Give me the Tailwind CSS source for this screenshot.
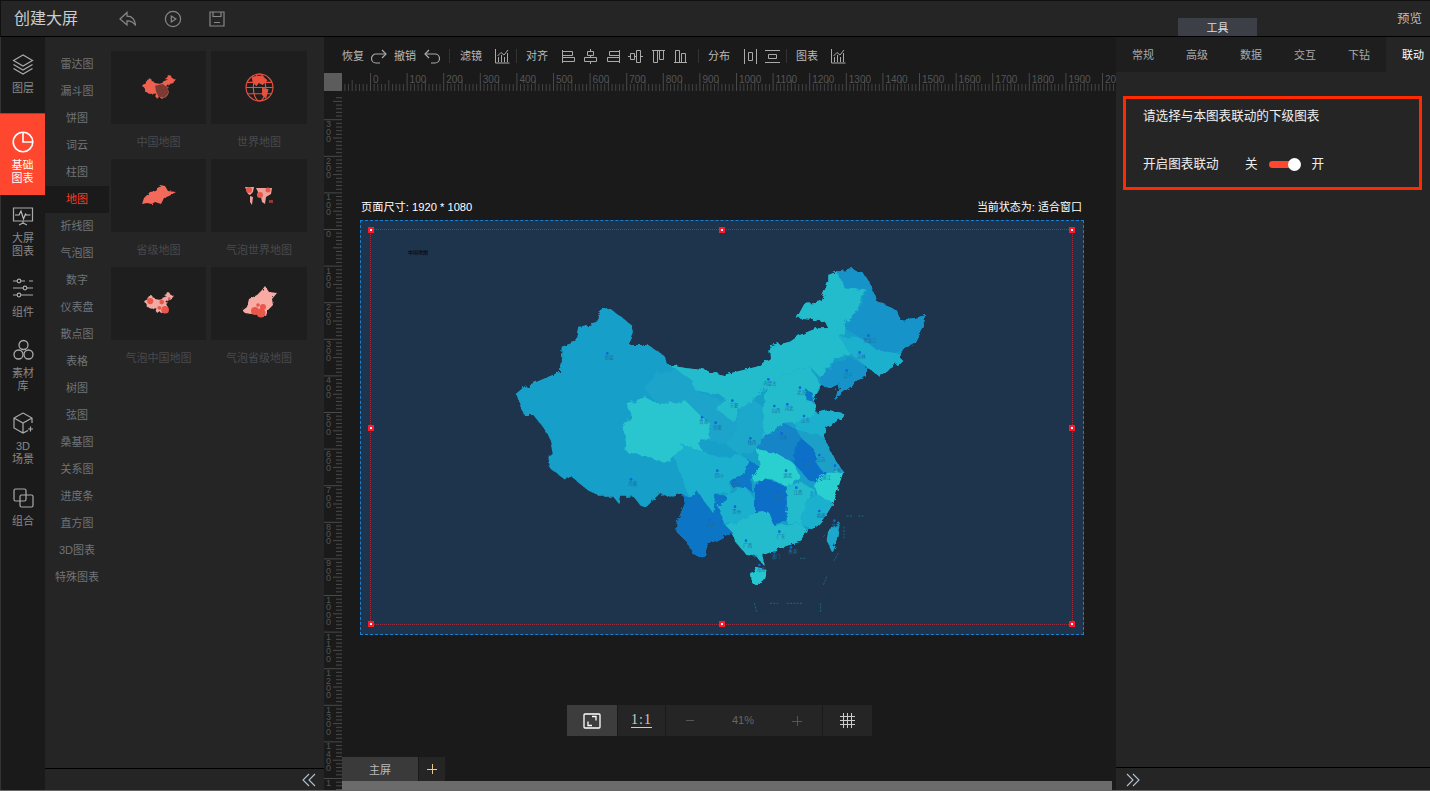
<!DOCTYPE html>
<html lang="zh-CN">
<head>
<meta charset="UTF-8">
<title>创建大屏</title>
<script src="https://cdn.jsdelivr.net/npm/@tailwindcss/browser@4"></script>
</head>
<body class="relative w-[1430px] h-[791px] overflow-hidden bg-[#252525] text-[#777] text-xs font-['Liberation_Sans','Noto_Sans_CJK_SC',sans-serif] flex flex-col">

<svg class="hidden" width="0" height="0">
  <defs>
    <path id="china" d="M50 405 85 375 110 365 180 335 185 260 225 245 235 200 290 190 290 165 315 145 335 150 395 195 400 225 385 255 445 255 490 285 505 315 560 325 610 330 670 345 730 330 770 320 810 295 808 260 830 255 870 245 900 225 950 205 985 205 975 185 940 180 890 175 915 128 960 125 985 65 985 45 1010 35 1060 28 1090 40 1115 80 1130 125 1190 150 1200 180 1240 175 1280 165 1265 205 1240 255 1205 265 1205 310 1170 320 1140 350 1100 320 1095 345 1020 405 1005 420 1020 370 990 385 965 375 940 425 950 460 985 450 1030 460 1025 475 980 500 970 530 1000 590 1020 620 1030 635 1015 680 1000 730 975 770 940 810 920 810 900 845 850 860 790 885 790 915 770 890 740 885 710 850 695 820 670 835 620 860 615 890 580 885 565 850 530 815 530 790 555 730 545 700 520 710 480 700 440 740 420 735 400 710 360 710 355 730 340 710 300 710 250 680 215 650 190 655 150 625 145 590 160 590 150 540 135 510 100 465 70 465Z"/>
    <g id="bar-chart" fill="none" stroke="#aaa" stroke-width="1">
      <path d="M1.500 1v14h14"/><path d="M4.500 14V9M7.500 14V7M10.500 14V9M13.500 14V5"/><path d="M3.500 8 7 4.500l3 2.500 4-5"/>
    </g>
  </defs>
</svg>

<!-- top bar -->
<header class="h-[37px] shrink-0 flex items-center bg-[#252525] border-t border-t-[#111] border-b border-b-black border-l border-l-[#111] relative">
  <span class="ml-[13px] w-[64px] text-base leading-none text-[#ccc] whitespace-nowrap">创建大屏</span>
  <svg class="ml-[41px]" width="18" height="18" viewBox="0 0 18 18" fill="none" stroke="#888" stroke-width="1.200"><path d="M1 9 8 2.500v3.600c5 0 8 3.200 8.600 9.400-2-3.400-4.600-4.600-8.600-4.600v4L1 9Z"/></svg>
  <svg class="ml-[27px]" width="18" height="18" viewBox="0 0 18 18" fill="none" stroke="#888" stroke-width="1.200"><circle cx="9" cy="9" r="7.600"/><path d="M7.300 6v6l4.600-3-4.600-3Z"/></svg>
  <svg class="ml-[27px]" width="16" height="16" viewBox="0 0 16 16" fill="none" stroke="#888" stroke-width="1.200"><path d="M1 1h14v14H1z"/><path d="M4 1v4.500h8V1M5 11.500h6"/></svg>
  <div class="absolute left-[1177px] top-[17px] w-[79px] h-[18px] bg-[#3c4046] text-[#ddd] text-[11px] leading-[20px] text-center">工具</div>
  <span class="absolute right-[8px] top-[10px] text-[#bbb] text-[12.500px] leading-4">预览</span>
</header>

<div class="flex-1 flex min-h-0">
  <!-- icon rail -->
  <nav class="w-[45px] shrink-0 bg-[#1a1a1a] border-l border-l-[#333] flex flex-col items-center text-center leading-[13px] text-[#888] text-[11px]">
    <div class="h-[76px] w-full flex flex-col items-center pt-[17px]">
      <svg width="22" height="22" viewBox="0 0 22 22" fill="none" stroke="#aaa" stroke-width="1.200"><path d="M11 1 1.500 6.500 11 12l9.500-5.500L11 1Z"/><path d="M1.500 10.500 11 16l9.500-5.500M1.500 14.500 11 20l9.500-5.500"/></svg>
      <span class="mt-[6px]">图层</span>
    </div>
    <div class="h-[82px] w-[45px] -ml-px flex flex-col items-center pt-[17px] bg-[#ff462e] text-white border-t border-t-[#b03a2a]">
      <svg width="22" height="22" viewBox="0 0 22 22" fill="none" stroke="#fff" stroke-width="1.600"><circle cx="11" cy="11" r="9.800"/><path d="M11 1.200V11h9.800"/></svg>
      <span class="mt-[6px]">基础<br>图表</span>
    </div>
    <div class="h-[72px] w-full flex flex-col items-center pt-[12px]">
      <svg width="22" height="20" viewBox="0 0 22 20" fill="none" stroke="#aaa" stroke-width="1.200"><path d="M1.500 1h19v13h-19zM11 14v3M7 18l4-2 4 2"/><path d="M3 8h4l2-4 2.500 8 2-5 1 1h4" stroke="#bbb"/></svg>
      <span class="mt-[5px]">大屏<br>图表</span>
    </div>
    <div class="h-[59px] w-full flex flex-col items-center pt-[11px]">
      <svg width="22" height="20" viewBox="0 0 22 20" fill="none" stroke="#aaa" stroke-width="1.200"><path d="M1 3h12M17 3h4M1 10h10M15 10h6M1 17h4M9 17h12"/><circle cx="7" cy="3" r="1.800" fill="#1a1a1a"/><circle cx="13" cy="10" r="1.800" fill="#1a1a1a"/><circle cx="7" cy="17" r="1.800" fill="#1a1a1a"/></svg>
      <span class="mt-[8px]">组件</span>
    </div>
    <div class="h-[74px] w-full flex flex-col items-center pt-[13px]">
      <svg width="21" height="22" viewBox="0 0 21 22" fill="none" stroke="#aaa" stroke-width="1.300"><circle cx="10.500" cy="6" r="4.500"/><circle cx="5.500" cy="15.500" r="4.500"/><circle cx="15.500" cy="15.500" r="4.500"/></svg>
      <span class="mt-[6px]">素材<br>库</span>
    </div>
    <div class="h-[69px] w-full flex flex-col items-center pt-[12px]">
      <svg width="21" height="22" viewBox="0 0 21 22" fill="none" stroke="#aaa" stroke-width="1.200"><path d="M10 1 1 6v10l9 5 5-2.500M19 11V6l-9-5M1 6l9 5 9-5M10 11v10"/><path d="M15 17h5M17.500 14.500v5"/></svg>
      <span class="mt-[6px]">3D<br>场景</span>
    </div>
    <div class="w-full flex flex-col items-center pt-[19px]">
      <svg width="21" height="20" viewBox="0 0 21 20" fill="none" stroke="#aaa" stroke-width="1.200"><rect x="1" y="1" width="12" height="12" rx="1.500"/><rect x="7" y="7" width="13" height="12" rx="1.500"/></svg>
      <span class="mt-[7px]">组合</span>
    </div>
  </nav>

  <!-- chart category and thumbnail panel -->
  <aside class="w-[279px] shrink-0 flex flex-col bg-[#252525]">
    <div class="flex-1 flex min-h-0">
      <ul class="w-[64px] shrink-0 pt-[14px] text-center text-[11px] text-[#6f7478] [&>li]:h-[27px] [&>li]:leading-[27px]">
        <li>雷达图</li><li>漏斗图</li><li>饼图</li><li>词云</li><li>柱图</li>
        <li class="bg-[#1a1a1a] text-[#ff3b22]">地图</li>
        <li>折线图</li><li>气泡图</li><li>数字</li><li>仪表盘</li><li>散点图</li><li>表格</li><li>树图</li><li>弦图</li><li>桑基图</li><li>关系图</li><li>进度条</li><li>直方图</li><li>3D图表</li><li>特殊图表</li>
      </ul>
      <div class="ml-[2px] pt-[14px] grid grid-cols-[95px_96px] gap-x-[5px] auto-rows-[108px] text-[11px] text-[#484a4e] text-center">
        <div>
          <div class="h-[73px] bg-[#1e1e1e] flex items-center justify-center">
            <svg width="34" height="28" viewBox="40 20 1250 960"><use href="#china" fill="#f0604f"/><path d="M520 420 800 350 1000 500 1020 680 860 860 650 820 560 640Z" fill="#7d3a33"/></svg>
          </div>
          <div class="leading-[36px]">中国地图</div>
        </div>
        <div>
          <div class="h-[73px] bg-[#1e1e1e] flex items-center justify-center">
            <svg width="29" height="29" viewBox="0 0 28 28" fill="none" stroke="#e8503f" stroke-width="1.100"><circle cx="14" cy="14" r="13"/><ellipse cx="14" cy="14" rx="6" ry="13"/><path d="M2 9h24M1 14h26M2 20h24"/><path d="M7 4 16 3l5 4-4 4-4-2-2 3-3-3ZM17 15l5 1-2 8-3-3Z" fill="#e8503f"/></svg>
          </div>
          <div class="leading-[36px]">世界地图</div>
        </div>
        <div>
          <div class="h-[73px] bg-[#1e1e1e] flex items-center justify-center">
            <svg width="36" height="24" viewBox="0 0 36 24">
              <filter id="rough-small" x="-10%" y="-10%" width="120%" height="120%"><feTurbulence type="fractalNoise" baseFrequency="0.5" numOctaves="1" seed="2"/><feDisplacementMap in="SourceGraphic" scale="2.500"/></filter>
              <path filter="url(#rough-small)" d="M3 14 9 8l6-1 4-6 5 1 3 5 8 1-7 4-5 2-3 6-6-2-3 2-5-1-5 1Z" fill="#f3695c"/>
            </svg>
          </div>
          <div class="leading-[36px]">省级地图</div>
        </div>
        <div>
          <div class="h-[73px] bg-[#1e1e1e] flex items-center justify-center">
            <svg width="30" height="21" viewBox="0 0 30 21"><path d="M1 2h9l-1 5-3 3-2-1ZM6 11l3 1-1 8-2-3ZM12 3h16l-1 6-5 3-1 7-3-2-1-5-4-1 1-4Z" fill="#eba29a"/><circle cx="5" cy="5" r="3" fill="#e8574a"/><circle cx="16" cy="10" r="3" fill="#e8574a"/><circle cx="24" cy="5" r="2.500" fill="#e8574a"/><path d="M25 15h4v3h-4Z" fill="#8a3b33"/></svg>
          </div>
          <div class="leading-[36px]">气泡世界地图</div>
        </div>
        <div>
          <div class="h-[73px] bg-[#1e1e1e] flex items-center justify-center">
            <svg width="30" height="25" viewBox="40 20 1250 960"><use href="#china" fill="#f0aaa3"/><circle cx="300" cy="400" r="130" fill="#e8574a"/><circle cx="780" cy="440" r="100" fill="#e8574a"/><circle cx="680" cy="680" r="80" fill="#e8574a"/><circle cx="920" cy="760" r="160" fill="#e8574a"/><circle cx="1090" cy="300" r="60" fill="#e8574a"/></svg>
          </div>
          <div class="leading-[36px]">气泡中国地图</div>
        </div>
        <div>
          <div class="h-[73px] bg-[#1e1e1e] flex items-center justify-center">
            <svg width="37" height="36" viewBox="0 0 37 36"><path filter="url(#rough-small)" d="M1 25 6 21l2-8 8-4 5-5 3-4 4 6 8 1-5 6 1 6-5 5-2 6-8-3-7 1-6-1-3-3Z" fill="#f8aaa3"/><circle cx="14" cy="25" r="4" fill="#e8574a"/><circle cx="20" cy="27" r="4.500" fill="#e8574a"/><circle cx="22" cy="21" r="3" fill="#e8574a"/><circle cx="17" cy="19" r="1.800" fill="#e8574a"/></svg>
          </div>
          <div class="leading-[36px]">气泡省级地图</div>
        </div>
      </div>
    </div>
    <div class="h-[23px] shrink-0 border-t border-t-black flex justify-end items-center pr-[8px]">
      <svg width="14" height="14" viewBox="0 0 14 14" fill="none" stroke="#b5c3cf" stroke-width="1.100"><path d="M7 1 1 7l6 6M13 1 7 7l6 6"/></svg>
    </div>
  </aside>

  <main class="flex-1 min-w-0 flex flex-col bg-[#1a1a1a]">
    <div class="h-[35px] shrink-0 flex items-center pl-[16px] pt-[3px] text-[11px] text-[#bbb] text-center">
      <span class="w-[26px]">恢复</span>
      <span class="w-[26px] flex justify-center"><svg width="16" height="15" viewBox="0 0 16 15" fill="none" stroke="#aaa" stroke-width="1.200"><path d="M15 5H5a4 4 0 0 0 0 9h4"/><path d="M11 1l4 4-4 4"/></svg></span>
      <span class="w-[26px]">撤销</span>
      <span class="w-[28px] flex justify-center"><svg width="16" height="15" viewBox="0 0 16 15" fill="none" stroke="#aaa" stroke-width="1.200"><path d="M1 5h10a4 4 0 0 1 0 9H7"/><path d="M5 1 1 5l4 4"/></svg></span>
      <span class="w-[6px] flex justify-center"><i class="w-px h-[14px] bg-[#333]"></i></span>
      <span class="w-[38px]">滤镜</span>
      <span class="w-[24px] flex justify-center"><svg width="16" height="16"><use href="#bar-chart"/></svg></span>
      <span class="w-[4px] flex justify-center"><i class="w-px h-[14px] bg-[#333]"></i></span>
      <span class="w-[38px] mr-[1px]">对齐</span>
      <span class="w-[22.500px] flex justify-center"><svg width="15" height="15" viewBox="0 0 15 15" fill="none" stroke="#aaa"><path d="M1.500 1v13M1.500 2.500h10v4h-10M1.500 8.500h12v4h-12"/></svg></span>
      <span class="w-[22.500px] flex justify-center"><svg width="15" height="15" viewBox="0 0 15 15" fill="none" stroke="#aaa"><path d="M4.500 2.500h6v4h-6zM1.500 8.500h12v4h-12zM7.500 0v2.500M7.500 6.500v2M7.500 12.500V15"/></svg></span>
      <span class="w-[22.500px] flex justify-center"><svg width="15" height="15" viewBox="0 0 15 15" fill="none" stroke="#aaa"><path d="M13.500 1v13M13.500 2.500h-10v4h10M13.500 8.500h-12v4h12"/></svg></span>
      <span class="w-[22.500px] flex justify-center"><svg width="15" height="15" viewBox="0 0 15 15" fill="none" stroke="#aaa"><path d="M2.500 4.500h4v6h-4zM8.500 1.500h4v12h-4zM0 7.500h2.500M6.500 7.500h2M12.500 7.500H15"/></svg></span>
      <span class="w-[22.500px] flex justify-center"><svg width="15" height="15" viewBox="0 0 15 15" fill="none" stroke="#aaa"><path d="M1 1.500h13M2.500 1.500v12h4v-12M8.500 1.500v9h4v-9"/></svg></span>
      <span class="w-[22.500px] flex justify-center"><svg width="15" height="15" viewBox="0 0 15 15" fill="none" stroke="#aaa"><path d="M1 13.500h13M2.500 13.500v-12h4v12M8.500 13.500v-9h4v9"/></svg></span>
      <span class="w-[12px] flex justify-center"><i class="w-px h-[14px] bg-[#333]"></i></span>
      <span class="w-[30px] mr-[5px]">分布</span>
      <span class="w-[22px] flex justify-center"><svg width="15" height="15" viewBox="0 0 15 15" fill="none" stroke="#aaa"><path d="M1.500 0v15M13.500 0v15M5.500 3.500h4v8h-4z"/></svg></span>
      <span class="w-[22px] flex justify-center"><svg width="15" height="15" viewBox="0 0 15 15" fill="none" stroke="#aaa"><path d="M0 1.500h15M0 13.500h15M3.500 5.500h8v4h-8z"/></svg></span>
      <span class="w-[6px] flex justify-center"><i class="w-px h-[14px] bg-[#333]"></i></span>
      <span class="w-[36px] mr-[1px]">图表</span>
      <span class="w-[24px] flex justify-center"><svg width="16" height="16"><use href="#bar-chart"/></svg></span>
    </div>

    <div class="flex-1 flex min-h-0">
      <div class="w-[18px] shrink-0 flex flex-col">
        <div class="h-[18px] mt-px shrink-0 bg-[#5c5c5c]"></div>
        <svg id="vruler" class="flex-1 w-[18px]" width="18" height="700"></svg>
      </div>
      <div class="flex-1 min-w-0 flex flex-col">
        <svg id="hruler" class="h-[19px] shrink-0" width="774" height="19"></svg>

        <div class="flex-1 relative min-h-0 overflow-hidden">
          <!-- the stage: items sit at their own place on the canvas -->
          <span class="absolute left-[19px] top-[108px] text-[11.200px] leading-4 text-white">页面尺寸: 1920 * 1080</span>
          <span class="absolute right-[34px] top-[108px] text-[11px] leading-4 text-white">当前状态为: 适合窗口</span>
          <div class="absolute left-[18px] top-[129px] w-[724px] h-[415px] bg-[#1e344d] border border-dashed border-[#1a7fd0]">
            <div class="absolute left-[9px] top-[8px] w-[703px] h-[396px] border border-dotted border-[#943040]">
              <i class="absolute -left-[3px] -top-[3px] w-[6px] h-[6px] bg-white border-2 border-[#ff1a2a]"></i>
              <i class="absolute left-[348px] -top-[3px] w-[6px] h-[6px] bg-white border-2 border-[#ff1a2a]"></i>
              <i class="absolute -right-[3px] -top-[3px] w-[6px] h-[6px] bg-white border-2 border-[#ff1a2a]"></i>
              <i class="absolute -left-[3px] top-[195px] w-[6px] h-[6px] bg-white border-2 border-[#ff1a2a]"></i>
              <i class="absolute -right-[3px] top-[195px] w-[6px] h-[6px] bg-white border-2 border-[#ff1a2a]"></i>
              <i class="absolute -left-[3px] -bottom-[3px] w-[6px] h-[6px] bg-white border-2 border-[#ff1a2a]"></i>
              <i class="absolute left-[348px] -bottom-[3px] w-[6px] h-[6px] bg-white border-2 border-[#ff1a2a]"></i>
              <i class="absolute -right-[3px] -bottom-[3px] w-[6px] h-[6px] bg-white border-2 border-[#ff1a2a]"></i>
              <span class="absolute left-[37px] top-[20px] text-[5px] leading-none text-black whitespace-nowrap">中国地图</span>
            </div>
            <!-- map -->
            <svg id="map" class="absolute left-[139px] top-[39px]" width="440" height="360" viewBox="0 0 1320 1080">
              <filter id="rough" x="-5%" y="-5%" width="110%" height="110%"><feTurbulence type="fractalNoise" baseFrequency="0.05" numOctaves="3" seed="4"/><feDisplacementMap in="SourceGraphic" scale="18"/></filter>
              <g filter="url(#rough)">
              <use href="#china" fill="#18a0c9"/>
              <path d="M505 315 560 325 610 330 670 345 730 330 770 320 810 295 808 260 830 255 870 245 900 225 950 205 985 205 975 185 940 180 890 175 915 128 960 125 985 65 985 45 1010 35 1035 85 1100 90 1075 130 1060 190 1040 210 1020 230 1050 280 1000 300 960 350 930 320 860 340 800 380 760 420 720 450 660 405 580 390 580 365 530 330Z" fill="#22bccd"/>
              <path d="M380 430 435 412 470 430 520 415 560 425 600 465 635 495 620 540 590 545 610 575 550 555 525 590 500 610 440 590 380 575 368 500 395 470Z" fill="#29c6cf"/>
              <path d="M1010 35 1060 28 1090 40 1115 80 1130 125 1190 150 1200 180 1240 175 1280 165 1265 205 1240 255 1205 265 1190 280 1130 270 1085 235 1040 210 1030 190 1075 150 1100 90 1035 85Z" fill="#1493c8"/>
              <path d="M1020 230 1085 235 1130 270 1190 280 1205 290 1205 310 1170 320 1140 350 1100 320 1050 280Z" fill="#1cb0cf"/>
              <path d="M960 350 1000 310 1050 290 1100 320 1095 345 1020 405 1005 420 1020 370 990 385 965 375Z" fill="#1493c8"/>
              <path d="M860 340 930 320 960 375 940 425 950 460 885 490 850 490 790 535 790 440 800 380Z" fill="#22bccd"/>
              <path d="M915 385 935 395 940 425 920 420Z" fill="#0a78c8"/>
              <path d="M885 490 950 460 985 450 1030 460 1025 475 980 500 970 530 890 510Z" fill="#1cb0cf"/>
              <path d="M790 535 850 490 890 510 905 535 885 575 880 610 830 580 770 570Z" fill="#1285c8"/>
              <path d="M885 560 905 535 945 570 950 610 970 640 950 670 925 660 900 630 880 610Z" fill="#0a6fc8"/>
              <path d="M890 510 970 530 1000 590 1020 620 1000 635 970 635 950 610 945 570 905 535Z" fill="#1ba0c8"/>
              <path d="M970 640 1030 635 1015 680 1000 730 960 725 945 680Z" fill="#2bcfd0"/>
              <path d="M945 700 1000 730 975 770 940 810 900 790 920 730Z" fill="#1cb0cf"/>
              <path d="M860 680 900 665 945 690 920 730 900 790 860 790Z" fill="#22bccd"/>
              <path d="M770 570 830 580 880 610 900 650 860 680 810 655 765 670 750 640 780 615Z" fill="#2bcfd0"/>
              <path d="M765 680 795 655 860 680 860 780 820 795 800 755 765 760Z" fill="#0a6ec8"/>
              <path d="M685 660 725 650 745 600 780 620 750 660 760 700 735 680 700 685Z" fill="#0a78c8"/>
              <path d="M655 740 690 700 735 680 765 720 765 760 700 790 670 790Z" fill="#1cb0cf"/>
              <path d="M820 795 900 790 920 810 900 845 850 860 790 885 790 915 770 890 790 850 810 810Z" fill="#22bccd"/>
              <path d="M670 795 700 790 765 760 805 755 820 795 790 885 740 885 710 850 695 820Z" fill="#22bccd"/>
              <path d="M545 700 570 715 590 690 610 720 640 760 645 700 685 715 655 740 670 790 700 820 670 835 620 860 615 890 580 885 565 850 530 815 530 790 555 730Z" fill="#0a74c5"/>
              <path d="M525 590 550 555 610 575 660 590 720 585 745 600 725 650 685 660 690 700 645 700 640 760 610 720 590 690 570 715 555 680Z" fill="#1cb0cf"/>
              <path d="M430 380 470 340 530 330 580 365 580 390 640 410 720 450 705 510 680 555 620 540 635 495 560 425 470 430Z" fill="#1ba4cb"/>
              <path d="M645 445 700 405 720 425 705 490 680 470Z" fill="#22bccd"/>
              <path d="M705 510 720 450 760 420 790 440 790 535 770 570 720 585 680 555Z" fill="#1ba8cb"/>
              <path d="M750 940 775 925 800 930 790 960 770 975 752 965Z" fill="#25c5d0"/>
              <path d="M985 810 1020 787 1010 840 995 875 980 840Z" fill="#1aa8cc"/>
              </g>
              <path d="M1040 768h20M1075 768h15M970 830l5-5M1032 800v35M1015 880l-15 25M900 895h18M980 950l-10 25M770 1055l-8-28M810 1030h25M860 1030h50M962 1030v28" stroke="#1b7f9f" stroke-width="2" stroke-dasharray="6 4" fill="none"/>
            </svg>
          </div>

          <div class="absolute left-[225px] top-[614px] h-[31px] flex gap-px text-xs text-[#777]">
            <div class="w-[50px] bg-[#3d3d3d] flex items-center justify-center">
              <svg width="18" height="16" viewBox="0 0 18 16" fill="none" stroke="#fff" stroke-width="1.300"><rect x="1" y="1" width="16" height="14" rx="1"/><path d="M5 8.500v4h4M9 3.500h4v4"/></svg>
            </div>
            <div class="w-[47px] bg-[#252525] flex items-center justify-center">
              <span class="font-['Liberation_Serif',serif] text-[14px] tracking-[1px] leading-[14px] text-[#ccc] border-b border-[#ccc]">1:1</span>
            </div>
            <div class="w-[156px] px-[20px] bg-[#252525] flex items-center justify-between text-[#666]">
              <span class="w-[8px] h-px bg-[#555]"></span>
              <span class="text-[11px]">41%</span>
              <svg width="10" height="10" viewBox="0 0 10 10" stroke="#555"><path d="M0 5.500h10M5.500 0v10"/></svg>
            </div>
            <div class="w-[49px] bg-[#252525] flex items-center justify-center">
              <svg width="15" height="15" viewBox="0 0 15 15" stroke="#ccc" stroke-width="1"><path d="M0 3.500h15M0 7.500h15M0 11.500h15M3.500 0v15M7.500 0v15M11.500 0v15"/></svg>
            </div>
          </div>
        </div>

        <div class="h-[24px] shrink-0 flex">
          <div class="w-[76px] bg-[#3a3a3a] text-center text-[#bbb] text-[11px] leading-[26px]">主屏</div>
          <div class="w-[26px] ml-px bg-[#252525] flex items-center justify-center">
            <svg width="10" height="10" viewBox="0 0 10 10" stroke="#e8c88c"><path d="M0 5.500h10M5.500 0v10"/></svg>
          </div>
        </div>
        <div class="h-[10px] shrink-0 bg-[#6b6b6b] mr-[4px]"></div>
      </div>
    </div>
  </main>

  <!-- settings panel -->
  <section class="w-[314px] shrink-0 bg-[#252525] flex flex-col text-xs relative">
    <div class="h-[35px] shrink-0 flex text-center text-[11px] leading-[37px] text-[#aaa] bg-[#1e1e1e]">
      <span class="w-[54px]">常规</span><span class="w-[54px]">高级</span><span class="w-[54px]">数据</span><span class="w-[54px]">交互</span><span class="w-[54px]">下钻</span>
      <span class="w-[44px] pl-[10px] whitespace-nowrap bg-[#252525] text-white">联动</span>
    </div>
    <div class="mt-[24px] ml-[7px] w-[299px] h-[94px] border-[3px] border-[#ff2a00] pl-[17px] pt-[9px] text-[12.600px] text-[#eee]">
      <p class="leading-4">请选择与本图表联动的下级图表</p>
      <div class="mt-[32px] flex items-center leading-4">
        <span class="w-[102px]">开启图表联动</span>
        <span>关</span>
        <span class="ml-[11px] w-[26px] h-[7px] rounded-full bg-[#ff462e] relative"><i class="absolute right-[-6px] -top-[3px] w-[13px] h-[13px] rounded-full bg-white"></i></span>
        <span class="ml-[17px]">开</span>
      </div>
    </div>
    <div class="mt-auto h-[24px] border-t border-t-black flex items-center pl-[10px]">
      <svg width="14" height="14" viewBox="0 0 14 14" fill="none" stroke="#b5c3cf" stroke-width="1.100"><path d="M1 1l6 6-6 6M7 1l6 6-6 6"/></svg>
    </div>
  </section>
</div>

<!-- hairline along the window's bottom edge -->
<div class="absolute left-0 right-0 bottom-0 h-px bg-[#666]"></div>

<script>
  // rulers
  var step = 36.6, h = '', v = '';
  var hx = 28;
  for (var i = -7; i < 210; i++) {
    var x = hx + i * 3.66;
    if (i % 10 === 0) continue;
    h += '<rect x="' + x + '" y="' + (i % 5 === 0 ? 8 : 12) + '" width="1" height="' + (i % 5 === 0 ? 11 : 7) + '" fill="#444"/>';
  }
  for (var n = 0; n <= 20; n++) {
    var tx = hx + n * step;
    h += '<rect x="' + tx + '" y="1" width="1" height="18" fill="#4a4a4a"/>';
    h += '<text x="' + (tx + 3) + '" y="11" font-size="10" fill="#555">' + n * 100 + '</text>';
  }
  document.getElementById('hruler').innerHTML = h;

  var vy = 138;
  for (var j = -36; j < 170; j++) {
    var y = vy + j * 3.66;
    if (j % 10 === 0) continue;
    var tick = j % 5 === 0 ? 9 : 6;
    v += '<rect x="' + (18 - tick) + '" y="' + y + '" width="' + tick + '" height="1" fill="#4a4a4a"/>';
  }
  for (var m = -3; m <= 15; m++) {
    var ty = vy + m * step;
    v += '<rect x="0" y="' + ty + '" width="18" height="1" fill="#4a4a4a"/>';
    String(Math.abs(m) * 100).split('').forEach(function (d, k) {
      var dy = ty + 8 + k * 7.3;
      if (dy < 698) v += '<text x="2" y="' + dy + '" font-size="9" fill="#555">' + d + '</text>';
    });
  }
  document.getElementById('vruler').innerHTML = v;

  // province markers on the map
  var marks = [[322,280,'新疆'],[393,658,'西藏'],[606,472,'青海'],[647,488,'甘肃'],[697,422,'宁夏'],[751,535,'陕西'],[652,632,'四川'],[805,358,'内蒙古'],[823,438,'山西'],[862,433,'河北'],[900,383,'北京'],[912,468,'山东'],[845,520,'河南'],[915,598,'安徽'],[958,585,'江苏'],[1005,617,'上海'],[975,640,'浙江'],[858,632,'湖北'],[830,697,'湖南'],[889,683,'江西'],[705,740,'贵州'],[628,780,'云南'],[738,842,'广西'],[838,815,'广东'],[958,753,'福建'],[1003,782,'台湾'],[823,877,'澳门'],[873,862,'香港'],[778,915,'海南'],[1105,227,'黑龙江'],[1079,277,'吉林'],[1040,332,'辽宁'],[703,660,'重庆']];
  var mp = '';
  marks.forEach(function (p) {
    mp += '<circle cx="' + p[0] + '" cy="' + p[1] + '" r="4" fill="#0b66e0"/>';
    mp += '<text x="' + (p[0] + 5) + '" y="' + (p[1] + 18) + '" font-size="13" text-anchor="middle" fill="#1d6f9b">' + p[2] + '</text>';
  });
  document.getElementById('map').insertAdjacentHTML('beforeend', mp);
</script>
</body>
</html>
